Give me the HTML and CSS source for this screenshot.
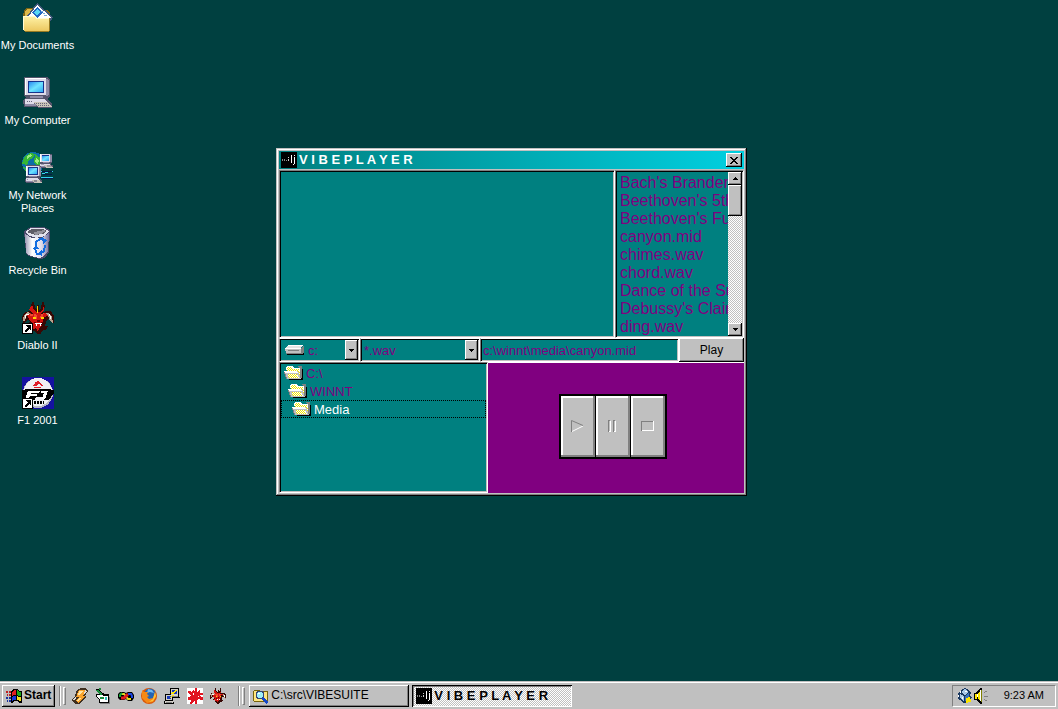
FILE: index.html
```html
<!DOCTYPE html>
<html lang="en">
<head>
<meta charset="utf-8">
<title>Vibeplayer</title>
<link rel="stylesheet" href="styles.css">
</head>
<body>
<svg class="defs" aria-hidden="true">
  <defs>
    <linearGradient id="screen" x2="1" y2="1"><stop stop-color="#2a8cf0"/><stop offset=".5" stop-color="#6fe4ff"/><stop offset="1" stop-color="#2fa8f4"/></linearGradient>
    <linearGradient id="bin"><stop stop-color="#9a98b4"/><stop offset=".3" stop-color="#fff"/><stop offset=".7" stop-color="#dcdaea"/><stop offset="1" stop-color="#7472a0"/></linearGradient>
    <linearGradient id="paper" x2="0" y2="1"><stop stop-color="#fff3a8"/><stop offset="1" stop-color="#ecc860"/></linearGradient>
    <symbol id="folder" viewBox="0 0 20 16">
      <path fill="#000" d="M5 14h12V4h2v11H5z"/>
      <path fill="#808080" d="M13 1h5v12h-2V4z"/>
      <path fill="#fff" d="M2 2l1-1h5l2 2h6v11H4z"/>
      <path stroke="#f0e400" stroke-dasharray="1 1" d="M4 2.500h4M3 3.500h6M4 4.500h11M3 5.500h12M14 6.500h2M13 7.500h3M14 8.500h2M15 9.500h1M14 10.500h2"/>
      <path fill="#c0c0c0" d="M0 6h14l3 8H3z"/>
      <path fill="#fff" d="M0 6h13v1l1 1H1z"/>
      <path fill="#fff" d="M4 9h9l2 4H5z"/>
      <path stroke="#f0e400" stroke-dasharray="1 1" d="M4 9.500h9M5 10.500h8M4 11.500h10M5 12.500h10"/>
      <path fill="#808080" d="M0 7h1v2h1v3h1v2H2v-2H1V9H0z"/>
    </symbol>
    <symbol id="ij" viewBox="0 0 16 16">
      <path fill="#000" d="M0 0h16v16H0z"/>
      <path fill="#888" d="M1 7h1v2H1zM3 7h1v2H3zM5 8h1v1H5z"/>
      <path fill="#ccc" d="M7 5h1v1H7zM7 7h1v2H7z"/>
      <path fill="#fff" d="M10 3h1v8h-1zM13 3h1v1h-1zM13 5h1v7h-1zM12 12h1v1h-1z"/>
    </symbol>
    <symbol id="shortcut" viewBox="0 0 11 11">
      <path fill="#000" d="M0 0h11v11H0z"/><path fill="#fff" d="M1 1h9v9H1z"/>
      <path fill="#000" d="M4 2h5v5H8V6H7v1H6v1H5v1H3V7h1V6h1V5h1V4H5V3H4z"/>
    </symbol>
    <symbol id="pc" viewBox="0 0 32 32">
      <path fill="#55546c" d="M2 0h23l3 2v17l-2 2v2l4 3v5H17l-3-1H2l-1-6 3-4-2-1z"/>
      <path fill="#dedbe9" d="M3 1h21v17H3zM3 22h20l2 3v3H3z"/>
      <path fill="#fff" d="M3 1h21v1H4v16H3z"/>
      <path fill="#8f8ba6" d="M24 2l3 1v15l-3 1zM8 19h13v2H8zM3 27h20v2H3z"/>
      <path fill="#16338c" d="M6 4h16v12H6z"/><path fill="url(#screen)" d="M7 5h14v10H7z"/>
      <path fill="#c9c3b8" d="M11 25h15l4 5H16z"/>
      <path stroke="#66647a" stroke-dasharray="1 1" d="M12 26.500h14M14 28.500h14M5 24.500h6"/>
    </symbol>
    <symbol id="demon" viewBox="0 0 32 32">
      <path fill="#380804" d="M10 0h2l1 6 2 2V3h2v5l2-2 1-6h2l1 5-2 5 4-1h4l3 5v7h-2l-4-4-2 3-1 4h3l-2 4h-3l-2 3-1 3h-2l-2-4-3-1-2-4-3-1 2-5-3-1-2 3H1l-1-6 3-5 5-1 4 2-3-6z"/>
      <path fill="#d41410" d="M10 3l2 5 3 2h3l3-2 1-5v5l-3 4 5-1 2 3-4 1-1 4-3 3 2 2-3 2-1 4-2-4-3 1-2-4 1-3-3-2-1-4-4-2 5-1 4 1-4-4z"/>
      <path fill="#f04830" d="M12 12l3 1v4h-2zM19 12l3-1-2 5h-2zM8 12h3v2H8z"/>
      <path fill="#b7a28e" d="M1 18l1-5 3-3 4 1-4 2-2 6H1zM24 11h3l3 4 1 6-3-2-2-5z"/>
      <path fill="#fff" d="M4 12h3v1H4zM3 13h1v3H3zM27 12h1v2h-1zM28 14h1v3h-1z"/>
      <path fill="#ffd400" d="M15 4h1v7h-1zM11 15h3v2h-3zM19 15h3v2h-3z"/>
      <path fill="#600" d="M12 20h2v1h-2zM19 20h2v1h-2zM15 18h3v2h-3z"/>
      <path fill="#fff" d="M13 21h7v1h-1v2h-1v-2h-3v2h-1v-2h-1z"/>
    </symbol>
  </defs>
</svg>

<main class="desktop">
  <nav class="shortcuts" aria-label="Desktop">
    <a class="shortcut" href="#documents">
      <svg class="icon-lg" viewBox="0 0 32 32" shape-rendering="crispEdges">
        <path fill="#7a6414" d="M2 9l2-3h7l2 2h12l3 3v18l-2 1H4l-3-2V14z"/>
        <path fill="#dcb848" d="M3 9l2-2h5l2 3h12v6H3z"/>
        <path fill="#44597c" d="M4 15L15 1l16 14-4 7z"/><path fill="#fff" d="M6 15L15 3l14 12-3 5z"/>
        <path fill="#2468c4" d="M10 10l5-5 6 5-6 6z"/><path fill="#58d8f4" d="M12 10l3-3 3 3-3 4z"/>
        <path fill="#70a8d8" d="M19 9h2v1h-2zM21 11h2v1h-2zM22 13h3v1h-3z"/>
        <path fill="url(#paper)" d="M1 14h12l2 2h13v13H3l-2-1z"/><path fill="#fffbd2" d="M1 14h12l2 2h12v1H14l-2-2H2v13H1z"/>
        <path fill="#977a22" d="M27 16h1v13h-1zM3 29h24v1H3z"/>
      </svg>
      <span>My Documents</span>
    </a>
    <a class="shortcut" href="#computer">
      <svg class="icon-lg" shape-rendering="crispEdges"><use href="#pc"/></svg>
      <span>My Computer</span>
    </a>
    <a class="shortcut" href="#network">
      <svg class="icon-lg" viewBox="0 0 32 32" shape-rendering="crispEdges">
        <circle cx="11" cy="11" r="11" fill="#0a6da8"/>
        <path fill="#35b535" d="M2 5l6-4 5 1-2 4-4 2-2 5-5-1zM13 2l7 5-3 8-5-4zM1 15l6 2-1 5z"/>
        <path fill="#9cec7e" d="M5 4l4-2 1 2-5 3zM14 6l3 2-1 4-3-2z"/>
        <path stroke="#36d0f0" fill="none" d="M19 19h12M20 22l9-3M19 25h12"/>
        <path stroke="#061848" fill="none" d="M20 20l10-1M21 23l9-1M20 26h11"/>
        <svg x="17" y="1" width="15" height="16"><use href="#pc"/></svg>
        <svg x="2" y="13" width="20" height="19"><use href="#pc"/></svg>
      </svg>
      <span>My Network Places</span>
    </a>
    <a class="shortcut" href="#recycle">
      <svg class="icon-lg" viewBox="0 0 32 32" shape-rendering="crispEdges">
        <path fill="#4b496a" d="M2 4l7-4h13l6 3-1 22-4 6-5 1-12-3-2-3z"/>
        <path fill="url(#bin)" d="M3 7l7 4h10l7-5-1 18-5 6-4 1-11-3-2-3z"/>
        <path fill="#e4e3ee" d="M3 5l6-4h13l5 3-4 5-9 2-8-3z"/>
        <path fill="#5e5c66" d="M5 5l5-3h11l4 2-4 3-8 1z"/><path fill="#94929c" d="M12 5l10-2 2 1-5 3-6 1z"/>
        <path stroke="#126de0" stroke-width="2" fill="none" d="M14 19v-4l4-3 4 1M23 18l-1 6-4 3M13 22l2 5h3"/>
        <path fill="#126de0" d="M20 10l5 3-4 4zM20 22v7l-4-3zM11 22l3-4 3 4z"/>
      </svg>
      <span>Recycle Bin</span>
    </a>
    <a class="shortcut" href="#diablo">
      <svg class="icon-lg" viewBox="0 0 32 32" shape-rendering="crispEdges">
        <use href="#demon"/><svg x="0" y="21" width="11" height="11"><use href="#shortcut"/></svg>
      </svg>
      <span>Diablo II</span>
    </a>
    <a class="shortcut" href="#f1">
      <svg class="icon-lg" viewBox="0 0 32 32" shape-rendering="crispEdges">
        <path fill="#1512a0" d="M0 0h32v32H0z"/><circle cx="16" cy="16" r="15" fill="#b8b8c4"/>
        <circle cx="16" cy="15" r="14" fill="#f0f0f4"/>
        <path fill="#e01d28" d="M11 9l4-5h2l4 5h-2l-1-2h-2l-1 2zM13 5h1v1h-1zM12 10h7v1h-7z"/>
        <path fill="#000" d="M0 13l6-1h20l6 1v3l-5 7h-5v-3h-8l-1 3H0z"/>
        <path fill="#fff" d="M6 14h12l-1 2H9l-1 1h7v2H8l-2 3H3zM19 14h7l-3 8h-3l2-6h-3z"/>
        <path fill="#000" d="M12 24h2v3h-2zM15 24h2v3h-2zM18 24h2v3h-2zM21 24h1v3h-1z"/>
        <svg x="0" y="21" width="11" height="11"><use href="#shortcut"/></svg>
      </svg>
      <span>F1 2001</span>
    </a>
  </nav>

  <section class="window" aria-label="Vibeplayer">
    <header class="titlebar">
      <svg class="icon-sm" shape-rendering="crispEdges"><use href="#ij"/></svg>
      <h1>V I B E P L A Y E R</h1>
      <button class="raised close" aria-label="Close">
        <svg width="8" height="7" viewBox="0 0 8 7" shape-rendering="crispEdges"><path d="M0 0h2v1h1v1h2V1h1V0h2v1H7v1H6v1H5v1h1v1h1v1h1v1H6V6H5V5H3v1H2v1H0V6h1V5h1V4h1V3H2V2H1V1H0z"/></svg>
      </button>
    </header>

    <div class="top-row">
      <div class="sunken video"></div>
      <div class="sunken files">
        <ul class="file-list">
          <li>Bach's Brandenburg Concerto.rmi</li>
          <li>Beethoven's 5th Symphony.rmi</li>
          <li>Beethoven's Fur Elise.rmi</li>
          <li>canyon.mid</li>
          <li>chimes.wav</li>
          <li>chord.wav</li>
          <li>Dance of the Sugar Fairy.rmi</li>
          <li>Debussy's Claire de Lune.rmi</li>
          <li>ding.wav</li>
        </ul>
        <div class="scrollbar">
          <button class="raised step" aria-label="Scroll up"><svg width="5" height="3" viewBox="0 0 5 3" shape-rendering="crispEdges"><path d="M2 0h1v1h1v1h1v1H0V2h1V1h1z"/></svg></button>
          <div class="raised thumb"></div>
          <button class="raised step down" aria-label="Scroll down"><svg width="5" height="3" viewBox="0 0 5 3" shape-rendering="crispEdges"><path d="M0 0h5v1H4v1H3v1H2V2H1V1H0z"/></svg></button>
        </div>
      </div>
    </div>

    <div class="control-row">
      <div class="field drive">
        <svg width="20" height="12" viewBox="0 0 20 12" shape-rendering="crispEdges">
          <path fill="#000" d="M2 10h16V3h1v7l-1 1H2z"/><path fill="#808080" d="M0 4h17l2-3v7l-2 2H1z"/>
          <path fill="#e4e4e4" d="M3 1h15l-2 3H0z"/><path fill="#c0c0c0" d="M0 5h16v4H1z"/><path fill="#fff" d="M3 1h15v1H2zM0 4h16v1H0z"/><path fill="#808080" d="M3 6h11v1H3z"/>
        </svg>
        <select aria-label="Drive"><option>c:</option></select>
        <span class="raised arrow"><svg width="5" height="3" viewBox="0 0 5 3" shape-rendering="crispEdges"><path d="M0 0h5v1H4v1H3v1H2V2H1V1H0z"/></svg></span>
      </div>
      <div class="field filter">
        <select aria-label="File type"><option>*.wav</option></select>
        <span class="raised arrow"><svg width="5" height="3" viewBox="0 0 5 3" shape-rendering="crispEdges"><path d="M0 0h5v1H4v1H3v1H2V2H1V1H0z"/></svg></span>
      </div>
      <div class="field path"><input type="text" aria-label="File path" value="c:\winnt\media\canyon.mid"></div>
      <button class="raised play">Play</button>
    </div>

    <div class="bottom-row">
      <ul class="sunken tree">
        <li class="level-0"><svg class="folder" shape-rendering="crispEdges"><use href="#folder"/></svg>C:\</li>
        <li class="level-1"><svg class="folder" shape-rendering="crispEdges"><use href="#folder"/></svg>WINNT</li>
        <li class="level-2 current"><svg class="folder" shape-rendering="crispEdges"><use href="#folder"/></svg>Media</li>
      </ul>
      <div class="stage">
        <div class="transport">
          <button aria-label="Play track"><svg width="14" height="14" viewBox="0 0 14 14" fill="none"><path stroke="#fff" d="M2 12.500L13 7"/><path stroke="#808080" d="M1.500 13V1.500L13 6.500"/></svg></button>
          <button aria-label="Pause"><svg width="14" height="14" viewBox="0 0 14 14" shape-rendering="crispEdges"><path fill="#808080" d="M3 1h2v12H3zM8 1h2v12H8z"/><path fill="#fff" d="M4 2h2v11H4zM9 2h2v11H9z"/><path fill="#c0c0c0" d="M4 2h1v10H4zM9 2h1v10H9z"/></svg></button>
          <button aria-label="Stop"><svg width="14" height="14" viewBox="0 0 14 14" shape-rendering="crispEdges"><path fill="#fff" d="M1 2h13v10H1z"/><path fill="#808080" d="M1 2h12v1H2v9H1z"/><path fill="#c0c0c0" d="M2 3h11v8H2z"/></svg></button>
        </div>
      </div>
    </div>
  </section>
</main>

<footer class="taskbar">
  <button class="raised start">
    <svg class="icon-sm" viewBox="0 0 16 16" shape-rendering="crispEdges">
      <path fill="#000" d="M5 3l3-2h3l3 2h2v12h-2l-3-2H9l-3 2H5z"/>
      <path fill="#e02020" d="M6 4l2-2h2v5H8L6 8z"/><path fill="#18a818" d="M11 2l3 2h1v4h-2l-2-1z"/>
      <path fill="#1838d8" d="M6 9l2-1h2v4H8l-2 1z"/><path fill="#f4e020" d="M11 8l2 1h2v4h-1l-3-1z"/>
      <path fill="#c02020" d="M0 3h2v2H0zM3 3h2v2H3zM1 6h1v2H1zM3 6h2v2H3z"/><path fill="#1830a0" d="M0 9h2v2H0zM3 9h2v2H3zM1 12h1v2H1zM3 12h2v2H3z"/>
    </svg>
    Start
  </button>
  <span class="divider"></span><span class="grip"></span>
  <nav class="quick-launch" aria-label="Quick launch">
    <a href="#winamp" aria-label="Winamp"><svg class="icon-sm" viewBox="0 0 16 16" shape-rendering="crispEdges">
      <path fill="#403020" d="M6 1l4-1h3l3 3-3 5 1 1-7 7H3l-3-4 3-4 1-4z"/><path fill="#f9a32c" d="M7 2h5l2 2-4 4h3l-7 7-2-2 3-4H4z"/><path fill="#ffe3a0" d="M7 3h4L8 7H6zM7 10h2l-3 3H5z"/><path fill="#ddd" d="M1 11l2-2 1 1-2 3zM13 2l2 1-2 3h-1z"/>
    </svg></a>
    <a href="#desktop" aria-label="Show desktop"><svg class="icon-sm" viewBox="0 0 16 16" shape-rendering="crispEdges">
      <path fill="#000" d="M0 1h3l5 4 1 1h5v9H4v-3L1 9V6h4z"/><path fill="#fff" d="M2 7h5l2 1h4v6H5v-2L2 9z"/><path fill="#1a8b3b" d="M1 2h2l4 4-1 2-3-3zM5 9h4v2H5zM4 0h2v2H4z"/><path fill="#3bb" d="M10 9h2v3h-2z"/><path fill="#808080" d="M14 9h1v6h-1zM5 15h10v1H5z"/>
    </svg></a>
    <a href="#infinity" aria-label="Media tool"><svg class="icon-sm" viewBox="0 0 16 16">
      <path fill="#000" d="M2 4h4l2 1 2-1h4l2 3v3l-2 3h-4l-2-2-2 1H2L0 10V6z"/>
      <path fill="none" stroke="#e7dd20" stroke-width="2" d="M3 6h3l4 5h3"/><path fill="none" stroke="#18a63a" stroke-width="2" d="M2 9V7l2-2"/><path fill="none" stroke="#e21b1b" stroke-width="3" d="M3 10h3l4-4"/><path fill="none" stroke="#1b45df" stroke-width="2" d="M10 6h3l1 2v2"/>
    </svg></a>
    <a href="#firefox" aria-label="Firefox"><svg class="icon-sm" viewBox="0 0 16 16">
      <circle cx="8" cy="8" r="8" fill="#db5708"/><circle cx="9" cy="6" r="5.500" fill="#2464b4"/><path fill="#71b8ee" d="M7 1l4 1 2 3-4-1-3 1z"/><path fill="#f58a16" d="M1 2l2 2 4 0-1 2 2 2-2 1 2 2 4-1 2-6 1 5-3 5-6 1-5-5z"/><path fill="#ffc53b" d="M14 4l1 4-3 5-4 1 4-3z"/>
    </svg></a>
    <a href="#putty" aria-label="Terminal"><svg class="icon-sm" viewBox="0 0 16 16" shape-rendering="crispEdges">
      <path fill="#000" d="M6 0h9v8l1 2H7L6 8zM1 6h8v6l1 3-1 1H0v-3h1z"/><path fill="#d4d0c8" d="M7 1h7v7H7zM2 7h6v5H2zM1 13h8v2H1z"/><path fill="#1838b8" d="M8 2h5v4H8zM3 8h4v3H3z"/><path fill="#ffe600" d="M12 2l-6 4h3l-5 5 7-4H8l5-4z"/><path fill="#808080" d="M8 8h6v1H8zM2 14h6v1H2z"/>
    </svg></a>
    <a href="#splat" aria-label="Splat"><svg class="icon-sm" viewBox="0 0 16 16" shape-rendering="crispEdges">
      <path fill="#fff" d="M0 0h16v16H0z"/><path fill="#e11320" d="M1 3h2l2 2 1-3 2 2V0h2v4l3-2v3h3v2h-3l1 2h2v3h-3v-1h-2l-1 2v3H8v-3l-2 1-1 2H3l1-4H1V9l3-1-3-3z"/><path fill="#fff" d="M6 5h1v2H6zM11 8h1v1h-1z"/>
    </svg></a>
    <a href="#diablo2" aria-label="Diablo II"><svg class="icon-sm" shape-rendering="crispEdges"><use href="#demon"/></svg></a>
  </nav>
  <span class="divider"></span><span class="grip"></span>
  <div class="tasks">
    <button class="raised task">
      <svg class="icon-sm" viewBox="0 0 16 16" shape-rendering="crispEdges">
        <path fill="#76630b" d="M0 3l1-1h5l1 1h7l1 1v10H1l-1-1z"/><path fill="#ffe680" d="M1 3h5l1 1h7v9H1z"/><circle cx="7" cy="7" r="4.500" fill="#347"/><circle cx="7" cy="7" r="3" fill="#9eeef8"/><path fill="#1448c8" d="M10 9l5 5-2 2-5-5z"/><path fill="#fff" d="M5 5h2v1H5z"/>
      </svg>
      <span>C:\src\VIBESUITE</span>
    </button>
    <button class="task active" aria-pressed="true">
      <svg class="icon-sm" shape-rendering="crispEdges"><use href="#ij"/></svg>
      <span>V I B E P L A Y E R</span>
    </button>
  </div>
  <div class="tray">
    <svg class="icon-sm" viewBox="0 0 16 16" shape-rendering="crispEdges">
      <path fill="#1a3860" d="M5 1l3-1 4 2 2 3-1 3 2 1-3 5-5 1-4-3-2-1 1-3-2-2 2-2h2z"/><path fill="#a9c8e8" d="M4 4l4-3 4 3-4 3zM3 6l4 2v5l-4-3z"/><path fill="#3c73bd" d="M8 8l4-3v5l-4 3z"/><path fill="#fff" d="M3 3h1v2H3zM8 3h2v1H8zM1 7h1v2H1zM5 9h1v2H5z"/><path fill="#ffe600" d="M9 10h2V9h2v2h1v3h-3v1H9z"/>
    </svg>
    <svg class="icon-sm" viewBox="0 0 16 16" shape-rendering="crispEdges">
      <path fill="#000" d="M7 0h2v16H7l-4-4H1V5h2z"/><path fill="#ffe600" d="M2 6h2v5H2zM5 5l2-2v10l-2-2z"/><path fill="#fff" d="M4 6h1v3H4zM7 2h1v11H7z"/><path fill="#808000" d="M8 2h1v12H8z"/><path stroke="#808080" d="M11 4.500h1M12 3.500h2M11 8.500h4M11 11.500h1M12 12.500h2"/>
    </svg>
    <time>9:23 AM</time>
  </div>
</footer>
</body>
</html>
```
FILE: styles.css
```css
:root {
  --face: #c0c0c0;
  --shade: #808080;
  --teal: #008080;
  --purple: #800080;
}

* { box-sizing: border-box; }

body {
  display: flex;
  flex-direction: column;
  min-height: 100vh;
  margin: 0;
  background: #004040;
  color: #000;
  font: 11px/13px "Liberation Sans", Arial, sans-serif;
}

ul { margin: 0; padding: 0; list-style: none; }
button, input, select { margin: 0; padding: 0; border: 0; border-radius: 0; color: inherit; font: inherit; }
svg { display: block; flex: none; }
.defs { position: absolute; width: 0; height: 0; }
.icon-sm { width: 16px; height: 16px; }
.icon-lg { width: 32px; height: 32px; }

.raised {
  background: var(--face);
  box-shadow: inset -1px -1px #000, inset 1px 1px #fff, inset -2px -2px var(--shade);
}

.sunken {
  border: 1px solid;
  border-color: var(--shade) #fff #fff var(--shade);
  background: var(--teal);
  box-shadow: inset 1px 1px #000, inset -1px -1px var(--face);
}

/* Desktop */
.desktop { position: relative; flex: 1; }
.shortcuts { display: grid; grid-auto-rows: 75px; width: 75px; }
.shortcut {
  display: flex;
  flex-direction: column;
  align-items: center;
  gap: 5px;
  padding-top: 2px;
  color: #fff;
  text-align: center;
  text-decoration: none;
}
.shortcut span { max-width: 74px; }

/* Player window */
.window {
  position: absolute;
  top: 148px;
  left: 276px;
  width: 471px;
  padding: 3px;
  background: var(--face);
  box-shadow: inset -1px -1px #000, inset 1px 1px var(--face), inset -2px -2px var(--shade), inset 2px 2px #fff;
}
.titlebar {
  display: flex;
  align-items: center;
  gap: 2px;
  height: 18px;
  margin-bottom: 1px;
  padding: 0 2px;
  background: linear-gradient(90deg, #008080, #00d0e0);
  color: #fff;
}
.titlebar h1 { flex: 1; margin: 0; font-size: 13px; line-height: 16px; }
.close { display: grid; place-items: center; width: 16px; height: 14px; }

.top-row { display: flex; height: 168px; }
.video { flex: 1; }
.files { display: flex; width: 129px; padding: 1px; }
.file-list {
  flex: 1;
  min-width: 0;
  overflow: hidden;
  padding: 2px 0 0 3px;
  color: var(--purple);
  font-size: 16px;
  line-height: 18px;
  white-space: nowrap;
}
.scrollbar {
  display: flex;
  flex-direction: column;
  width: 14px;
  background: repeating-conic-gradient(#fff 0 25%, #c0c0c0 0 50%) 0 0 / 2px 2px;
}
.step { display: grid; place-items: center; height: 13px; }
.thumb { height: 31px; }
.down { margin-top: auto; }

.control-row { display: flex; height: 24px; color: var(--purple); font-size: 13px; }
.field {
  position: relative;
  display: flex;
  align-items: center;
  border: 1px solid;
  border-color: #fff #fff #fff var(--shade);
  background: var(--teal);
  box-shadow: inset 1px 1px #000, inset -1px -1px var(--face);
}
.field select, .field input { flex: 1; min-width: 0; height: 18px; appearance: none; background: transparent; outline: 0; }
.field input { padding-left: 2px; }
.drive { width: 81px; padding-left: 5px; }
.drive select { padding-left: 3px; }
.filter { width: 120px; padding-left: 3px; }
.path { flex: 1; }
.arrow {
  position: absolute;
  top: 1px;
  right: 1px;
  bottom: 1px;
  display: grid;
  place-items: center;
  width: 13px;
  pointer-events: none;
}
.play { width: 65px; color: #000; font-size: 12px; }

.bottom-row { display: flex; height: 131px; }
.tree { width: 209px; padding: 1px; color: var(--purple); font-size: 13px; }
.tree li { display: flex; align-items: center; gap: 2px; height: 18px; padding-left: 3px; }
.tree .level-1 { padding-left: 7px; }
.tree .level-2 { padding-left: 11px; }
.tree .current { color: #fff; outline: 1px dotted #000; outline-offset: -1px; }
.folder { width: 20px; height: 16px; }
.stage { display: grid; flex: 1; place-items: center; padding: 0 6px 4px 0; border-top: 1px solid #fff; background: var(--purple); }
.transport { display: flex; gap: 1px; padding: 2px; background: #000; }
.transport button {
  display: grid;
  place-items: center;
  width: 34px;
  height: 61px;
  padding-right: 3px;
  background: var(--face);
  box-shadow: inset -2px -2px var(--shade), inset 2px 2px #fff;
}

/* Taskbar */
.taskbar {
  display: flex;
  align-items: center;
  height: 28px;
  padding: 2px 2px 1px;
  background: var(--face);
  box-shadow: inset 0 1px var(--face), inset 0 2px #fff;
}
.start { display: flex; align-items: center; gap: 2px; height: 22px; padding: 0 4px; font-size: 12px; font-weight: bold; }
.divider { width: 2px; height: 20px; margin-left: 4px; border-left: 1px solid var(--shade); background: #fff; }
.grip { width: 3px; height: 18px; margin: 0 6px 0 2px; border: 1px solid; border-color: #fff var(--shade) var(--shade) #fff; }
.quick-launch { display: flex; gap: 7px; margin-right: 8px; }
.tasks { display: flex; flex: 1; gap: 3px; min-width: 0; margin-left: -2px; }
.task { display: flex; align-items: center; gap: 2px; width: 160px; height: 22px; padding: 0 4px; font-size: 12px; white-space: nowrap; }
.active {
  background: repeating-conic-gradient(#fff 0 25%, #c0c0c0 0 50%) 0 0 / 2px 2px;
  box-shadow: inset 1px 1px #000, inset -1px -1px #fff, inset 2px 2px var(--shade);
  font-size: 13px;
  font-weight: bold;
}
.tray {
  display: flex;
  align-items: center;
  height: 22px;
  padding: 0 11px 0 4px;
  border: 1px solid;
  border-color: var(--shade) #fff #fff var(--shade);
}
.tray time { margin-left: 15px; }
```
